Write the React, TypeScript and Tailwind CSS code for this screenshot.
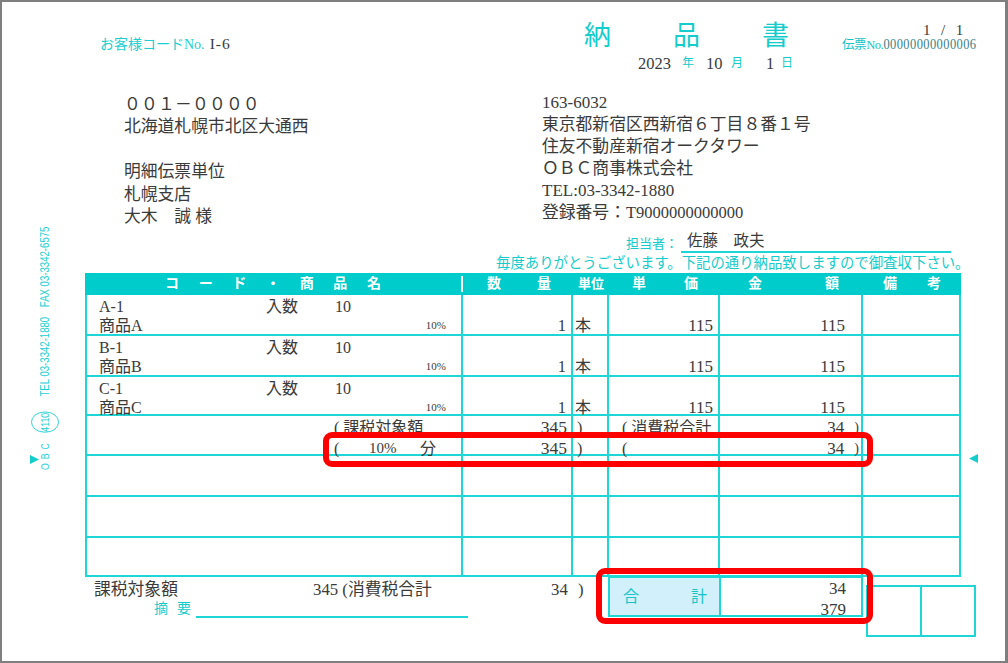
import React from 'react';

const cols = 'grid grid-cols-[376px_110px_36px_111px_143px_98px]';
const cell = 'border-r-2 border-[#1fd6d6] relative';

function ItemRow({ code, name, h }: { code: string; name: string; h: string }) {
    return (
        <div className={`${cols} ${h} border-b-2 border-[#1fd6d6]`}>
            <div className={`${cell} pl-[12px] pr-[15px] pt-[2px] leading-[19px]`}>
                <div className="flex">
                    <span className="w-[167px]">{code}</span>
                    <span className="w-[69px]">入数</span>
                    <span>10</span>
                </div>
                <div className="flex justify-between items-end">
                    <span>{name}</span>
                    <span className="text-[11px]">10%</span>
                </div>
            </div>
            <div className={`${cell} flex items-end justify-end pr-[5px] leading-[19px] text-[16.5px]`}>1</div>
            <div className={`${cell} flex items-end pl-[2px] leading-[19px]`}>本</div>
            <div className={`${cell} flex items-end justify-end pr-[5px] leading-[19px] text-[17px]`}>115</div>
            <div className={`${cell} flex items-end justify-end pr-[16px] leading-[19px] text-[17px]`}>115</div>
            <div className={cell}></div>
        </div>
    );
}

function EmptyRow({ h }: { h: string }) {
    return (
        <div className={`${cols} ${h} border-b-2 border-[#1fd6d6]`}>
            <div className={cell}></div>
            <div className={cell}></div>
            <div className={cell}></div>
            <div className={cell}></div>
            <div className={cell}></div>
            <div className={cell}></div>
        </div>
    );
}

function TaxRow() {
    return (
        <div className={`${cols} h-[40px] border-b-2 border-[#1fd6d6] leading-[21px] pt-[1px]`}>
            <div className={`${cell} pl-[247px] whitespace-nowrap`}>
                <div>( 課税対象額</div>
                <div className="flex">
                    <span className="w-[35px]">(</span>
                    <span className="w-[51px] text-[15px]">10%</span>
                    <span>分</span>
                </div>
            </div>
            <div className={`${cell} pr-[4px] text-right text-[17.5px]`}>
                <div>345</div>
                <div>345</div>
            </div>
            <div className={`${cell} pl-[4px]`}>
                <div>)</div>
                <div>)</div>
            </div>
            <div className={`${cell} pl-[13px] whitespace-nowrap`}>
                <div>( 消費税合計</div>
                <div>(</div>
            </div>
            <div className={`${cell} text-right text-[17px] pr-[2px]`}>
                <div className="flex justify-end">
                    <span className="pr-[10px]">34</span>
                    <span className="text-[14px]">)</span>
                </div>
                <div className="flex justify-end">
                    <span className="pr-[10px]">34</span>
                    <span className="text-[14px]">)</span>
                </div>
            </div>
            <div className={cell}></div>
        </div>
    );
}

export default function App() {
    return (
        <div className="relative w-[1008px] h-[663px] overflow-hidden bg-white border-t-2 border-l-2 border-b-2 border-r-[3px] border-[#7f7f7f] font-['Liberation_Serif','Noto_Sans_CJK_JP',serif] text-[16px] text-[#3a3a3a]">
            {/* top band */}
            <div className="flex h-[90px]">
                <div className="ml-[98px] mt-[33px] w-[484px] flex items-center h-[18px] whitespace-nowrap">
                    <span className="text-[14px] text-[#1ccfd2]">お客様コードNo.</span>
                    <span className="ml-[5px] text-[15.5px] tracking-[1px]">I-6</span>
                </div>
                <div className="w-[258px]">
                    <div className="mt-[20px] w-[205px] flex justify-between text-[27px] leading-[28px] text-[#14cccc]">
                        <span>納</span>
                        <span>品</span>
                        <span>書</span>
                    </div>
                    <div className="mt-[5px] ml-[54px] flex items-start text-[16.5px] leading-[18px]">
                        <span className="w-[44px]">2023</span>
                        <span className="w-[24px] text-[12px] leading-[16px] text-[#14cccc]">年</span>
                        <span className="w-[25px]">10</span>
                        <span className="w-[35px] text-[12px] leading-[16px] text-[#14cccc]">月</span>
                        <span className="w-[15px]">1</span>
                        <span className="text-[12px] leading-[16px] text-[#14cccc]">日</span>
                    </div>
                </div>
                <div className="w-[136px] pt-[20px]">
                    <div className="pl-[81px] text-[15px] tracking-[1px] leading-[16px] whitespace-pre">1  /  1</div>
                    <div className="flex items-center h-[15px] whitespace-nowrap">
                        <span className="text-[12.5px] text-[#14c4c8] tracking-[-0.4px]">伝票No.</span>
                        <span className="text-[12.5px] tracking-[0.4px] scale-y-110 text-[#3d7f86]">00000000000006</span>
                    </div>
                </div>
            </div>

            {/* addresses */}
            <div className="flex h-[132px] text-[16.8px]">
                <div className="ml-[122px] w-[418px] pt-[2px] leading-[22.4px]">
                    <div className="tracking-[0.2px]">００１－００００</div>
                    <div>北海道札幌市北区大通西</div>
                    <div className="h-[22.4px]"></div>
                    <div>明細伝票単位</div>
                    <div>札幌支店</div>
                    <div>大木　誠 様</div>
                </div>
                <div className="leading-[22px]">
                    <div className="text-[17px]">163-6032</div>
                    <div>東京都新宿区西新宿６丁目８番１号</div>
                    <div>住友不動産新宿オークタワー</div>
                    <div>ＯＢＣ商事株式会社</div>
                    <div className="text-[17px]">TEL:03-3342-1880</div>
                    <div>登録番号：<span className="text-[16.5px]">T9000000000000</span></div>
                </div>
            </div>

            {/* staff */}
            <div className="mt-[8px] h-[21px] flex items-end">
                <span className="ml-[624px] w-[55px] text-[13px] leading-[18px] text-[#14cccc]">担当者：</span>
                <div className="w-[270px] h-[21px] border-b-2 border-[#1fd6d6] pl-[6px] text-[15.5px] leading-[18px]">佐藤　政夫</div>
            </div>
            <div className="h-[20px] ml-[494px] text-[14.4px] leading-[20px] whitespace-nowrap text-[#14cccc]">
                毎度ありがとうございます。下記の通り納品致しますので御査収下さい。
            </div>

            {/* table */}
            <div className="ml-[83px] w-[876px] border-l-2 border-[#1fd6d6]">
                <div className="grid grid-cols-[378px_110px_36px_111px_143px_98px] h-[22px] -ml-[2px] w-[876px] bg-[#00cccc] text-white font-bold text-[14px] leading-[22px]">
                    <div className="relative flex justify-between pl-[80px] pr-[82px]">
                        <span>コ</span><span>ー</span><span>ド</span><span>・</span><span>商</span><span>品</span><span>名</span>
                        <span className="absolute right-0 top-[3px] h-[16px] w-[2px] bg-white"></span>
                    </div>
                    <div className="flex justify-between pl-[24px] pr-[22px]"><span>数</span><span>量</span></div>
                    <div className="text-center text-[13px] whitespace-nowrap">単位</div>
                    <div className="flex justify-between pl-[23px] pr-[22px]"><span>単</span><span>価</span></div>
                    <div className="flex justify-between pl-[28px] pr-[24px]"><span>金</span><span>額</span></div>
                    <div className="flex justify-between pl-[20px] pr-[20px]"><span>備</span><span>考</span></div>
                </div>
                <ItemRow code="A-1" name="商品A" h="h-[41px]" />
                <ItemRow code="B-1" name="商品B" h="h-[41px]" />
                <ItemRow code="C-1" name="商品C" h="h-[39px]" />
                <TaxRow />
                <EmptyRow h="h-[41px]" />
                <EmptyRow h="h-[41px]" />
                <EmptyRow h="h-[39px]" />
            </div>

            {/* footer */}
            <div className="ml-[83px] flex items-start">
                <div className="w-[523px] pl-[9px] pt-[2px]">
                    <div className="flex leading-[22px] whitespace-nowrap text-[16.8px]">
                        <span className="w-[219px]">課税対象額</span>
                        <span className="w-[238px]">345 (消費税合計</span>
                        <span className="w-[27px]">34</span>
                        <span>)</span>
                    </div>
                    <div className="flex items-start">
                        <span className="ml-[60px] mr-[5px] w-[37px] flex justify-between text-[14px] leading-[16px] text-[#14cccc]">
                            <span>摘</span><span>要</span>
                        </span>
                        <div className="w-[272px] h-[17px] border-b-2 border-[#1fd6d6]"></div>
                    </div>
                </div>
                <div className="w-[255px] h-[41px] -mt-[1px] flex border-2 border-[#1fd6d6]">
                    <div className="w-[111px] bg-[#d2f0fc] border-r-2 border-[#1fd6d6] flex items-center justify-between pl-[13px] pr-[12px] text-[16px] text-[#14c4c8]">
                        <span>合</span><span>計</span>
                    </div>
                    <div className="flex-1 pr-[15px] text-right leading-[21px] text-[17px]">
                        <div>34</div>
                        <div>379</div>
                    </div>
                </div>
                <div className="ml-[3px] mt-[8px] w-[110px] h-[52px] flex border-2 border-[#1fd6d6]">
                    <div className="w-[54px] border-r-2 border-[#1fd6d6]"></div>
                </div>
            </div>

            {/* form print along the left margin, squeezed along its length like the original */}
            <div className="absolute left-[29px] top-[190px] h-[309px] flex items-center justify-start rotate-180 scale-y-[0.8] [writing-mode:vertical-rl] text-[12px] leading-[14px] text-[#1ccfd2] whitespace-nowrap font-['Liberation_Sans',sans-serif]">
                <span className="tracking-[5px] text-[11px]">OBC</span>
                <span className="mt-[8px] border border-[#1ccfd2] rounded-full py-[7px] text-[11px] leading-[12px]">4110</span>
                <span className="mt-[19px]">TEL 03-3342-1880　FAX 03-3342-6575</span>
            </div>
            <svg className="absolute left-[28px] top-[453px]" width="10" height="10" viewBox="0 0 10 10">
                <polygon points="0,0 9,4.5 0,9" fill="#14cccc" />
            </svg>
            <svg className="absolute left-[967px] top-[452px]" width="10" height="10" viewBox="0 0 10 10">
                <polygon points="9,0 0,4.5 9,9" fill="#14cccc" />
            </svg>

            {/* red highlights */}
            <div className="absolute left-[321px] top-[430px] w-[550px] h-[35px] border-[6px] border-[#ff0000] rounded-[9px]"></div>
            <div className="absolute left-[594px] top-[566px] w-[277px] h-[56px] border-[6px] border-[#ff0000] rounded-[9px]"></div>
        </div>
    );
}
